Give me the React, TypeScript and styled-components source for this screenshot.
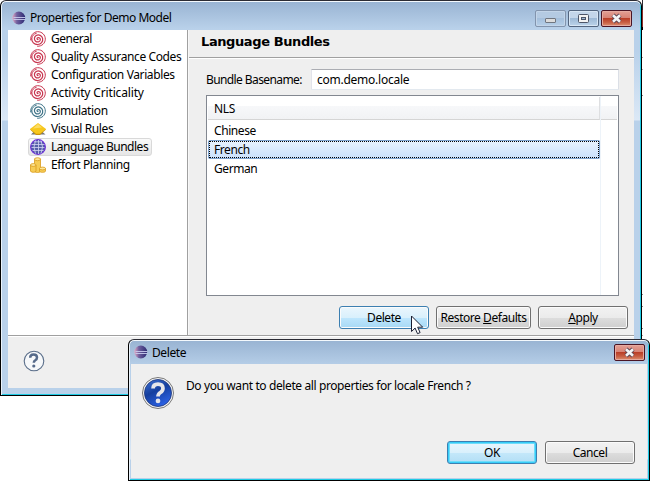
import React from "react";
import styled, { createGlobalStyle, css } from "styled-components";

const Global = createGlobalStyle`
  * { box-sizing: border-box; }
  html, body { margin: 0; background: #fff; overflow: hidden; }
  body { font: 12px/18px "Noto Sans", "Open Sans", sans-serif; color: #000; letter-spacing: -0.35px; }
`;

const Desktop = styled.main`
  position: relative;
  width: 650px;
  height: 484px;
  overflow: hidden;
`;

/* Sliver of another window peeking out behind the properties window. */
const BehindEdge = styled.div`
  position: absolute;
  left: 642px;
  top: 0;
  width: 1px;
  height: 336px;
  background: linear-gradient(
    #2b2b33 0 10px, #8e2f2a 10px 27px, #000 27px 30px, #fff 30px 57px, #a0a0a0 57px 58px,
    #fff 58px 69px, #abadb3 69px 70px, #fff 70px 95px, #828790 95px 96px, #fff 96px 294px,
    #828790 294px 295px, #fff 295px 306px, #888 306px 307px, #fff 307px 328px, #888 328px 329px,
    #fff 329px 335px, #a0a0a0 335px
  );
`;

/* Windows float freely on the desktop. */
const Frame = styled.section<{ $x: number; $y: number; $w: number; $h: number; $pad: string }>`
  position: absolute;
  left: ${(p) => p.$x}px;
  top: ${(p) => p.$y}px;
  width: ${(p) => p.$w}px;
  height: ${(p) => p.$h}px;
  display: flex;
  flex-direction: column;
  padding: ${(p) => p.$pad};
  border: 1px solid #000;
  border-top-color: #2b2b33;
  border-radius: 6px 6px 0 0;
  background: linear-gradient(#98b3d2, #b9d1ea 28px, #b9d1ea 50px, #dbe8f6 119px, #b9d1ea 120px);
  box-shadow: inset 0 1px #f4f9fd, inset 1px 0 #eaf3fb, inset -1px -1px #1ecbe4;
`;

const TitleBar = styled.header<{ $h: number; $left: number }>`
  flex: none;
  height: ${(p) => p.$h}px;
  display: flex;
  align-items: flex-start;
  padding-left: ${(p) => p.$left}px;
`;

const TitleIcon = styled.span<{ $top: number }>`
  flex: none;
  width: 14px;
  height: 14px;
  margin-top: ${(p) => p.$top}px;
  svg { display: block; }
`;

const Title = styled.h1<{ $top: number; $ls: number }>`
  flex: 1;
  margin: ${(p) => p.$top}px 0 0 4px;
  font: inherit;
  letter-spacing: ${(p) => p.$ls}px;
  white-space: nowrap;
`;

const Captions = styled.div<{ $top: number; $right: number }>`
  display: flex;
  gap: 2px;
  margin: ${(p) => p.$top}px ${(p) => p.$right}px 0 0;
`;

const Caption = styled.button<{ $kind?: "faded" | "close" }>`
  width: 31px;
  height: 17px;
  padding: 0;
  display: grid;
  place-items: center;
  border: 1px solid #53657f;
  border-radius: 2px;
  background: linear-gradient(#c4d6ea 0 45%, #9cb8d5 46%, #bcd3ea);
  box-shadow: inset 0 0 0 1px #d8e6f4;
  ${(p) => p.$kind === "faded" && css`
    border-color: #8294ad;
    background: linear-gradient(#b4cae2 0 45%, #a3bedb 46%, #b6cfe8);
    box-shadow: inset 0 0 0 1px #c3d5e9;
    svg { margin-top: 4px; }
  `}
  ${(p) => p.$kind === "close" && css`
    border-color: #4a1424;
    background: linear-gradient(#e3a095, #d88376 45%, #b83a24 46%, #c75d43 75%, #dd9070);
    box-shadow: inset 0 0 0 1px #e5aaa0;
  `}
`;

const Client = styled.div`
  flex: 1;
  min-height: 0;
  display: flex;
  flex-direction: column;
  background: #efefef;
`;

const Split = styled.div`
  flex: none;
  height: 305px;
  display: flex;
`;

const Tree = styled.ul`
  width: 180px;
  margin: 0;
  padding: 0 0 0 20px;
  list-style: none;
  background: #fff;
  border-right: 1px solid #a0a0a0;
`;

const TreeItem = styled.li<{ $selected?: boolean; $ls?: number }>`
  width: fit-content;
  height: 18px;
  display: flex;
  align-items: center;
  gap: 5px;
  padding: 0 3px 0 1px;
  border: 1px solid transparent;
  border-radius: 3px;
  line-height: 18px;
  white-space: nowrap;
  letter-spacing: ${(p) => p.$ls ?? -0.38}px;
  svg { flex: none; }
  ${(p) => p.$selected && css`
    border-color: #d9d9d9;
    background: linear-gradient(#fafafa, #e6e6e6);
  `}
`;

const Page = styled.div`
  flex: 1;
  display: flex;
  flex-direction: column;
  border-left: 1px solid #f8f8f8;
`;

const PageTitle = styled.h2`
  height: 29px;
  margin: 0;
  padding: 3px 0 0 12px;
  border-bottom: 1px solid #fff;
  box-shadow: inset 0 -1px #a0a0a0;
  font: bold 13px/18px "DejaVu Sans", sans-serif;
  letter-spacing: -0.4px;
`;

const Field = styled.label`
  display: flex;
  align-items: center;
  height: 21px;
  margin: 10px 15px 0 17px;
  white-space: nowrap;
`;

const FieldName = styled.span`
  width: 105px;
  letter-spacing: -0.6px;
`;

const Input = styled.input`
  flex: 1;
  min-width: 0;
  height: 21px;
  padding: 0 5px;
  border: 1px solid #e3e9ef;
  border-color: #abadb3 #dbdfe6 #e3e9ef #e2e3ea;
  border-radius: 1px;
  background: #fff;
  font: inherit;
  letter-spacing: -0.25px;
  outline: 0;
`;

const Table = styled.div`
  height: 201px;
  margin: 5px 15px 0 17px;
  display: flex;
  border: 1px solid #828790;
  background: #fff;
`;

const Column = styled.div`
  width: 394px;
  padding: 1px 0 0 1px;
  border-right: 1px solid #edf3f9;
`;

const HeadCell = styled.div`
  height: 23px;
  padding: 3px 0 0 6px;
  line-height: 18px;
  border-bottom: 1px solid #d5d5d5;
  border-right: 1px solid #dedfe1;
  background: linear-gradient(#fff 0 40%, #f7f8fa 41%, #f1f2f4);
`;

const HeadRest = styled(HeadCell)`
  flex: 1;
  margin: 1px 1px 0 0;
  border-right: 0;
`;

const Row = styled.div<{ $selected?: boolean }>`
  position: relative;
  height: 19px;
  padding-left: 6px;
  line-height: 19px;
  letter-spacing: -0.42px;
  ${(p) => p.$selected && css`
    border-radius: 2px;
    background: linear-gradient(#e9f3fe, #c9e0fc);
    box-shadow: inset 0 0 0 1px #7da2ce;
    &::after {
      content: "";
      position: absolute;
      inset: 1px;
      border: 1px dotted #000;
    }
  `}
`;

const Rows = styled.div`
  padding-top: 1px;
`;

const Actions = styled.div`
  display: flex;
  justify-content: flex-end;
  gap: 7px;
  margin: 10px 6px 0 0;
`;

const Button = styled.button<{ $w?: number; $tone?: "hot" | "default" }>`
  width: ${(p) => p.$w ?? 90}px;
  height: 23px;
  padding: 0;
  border: 1px solid #707070;
  border-radius: 3px;
  background: linear-gradient(#f2f2f2, #ebebeb 50%, #dddddd 51%, #cfcfcf);
  box-shadow: inset 0 0 0 1px #fbfbfb;
  color: #000;
  font: inherit;
  letter-spacing: -0.45px;
  white-space: nowrap;
  ${(p) => p.$tone === "hot" && css`
    border-color: #3c7fb1;
    background: linear-gradient(#eaf6fd, #d9f0fc 50%, #bee6fd 51%, #a7d9f5);
  `}
  ${(p) => p.$tone === "default" && css`
    border-color: #3c7fb1;
    background: linear-gradient(#eaf6fd, #d9f0fc 50%, #c4e8fa 51%, #b2def5);
    box-shadow: inset 0 0 0 1px #36cdf8, inset 0 0 0 2px #6fdcfa;
  `}
`;

const Footer = styled.footer`
  flex: 1;
  min-height: 0;
  padding: 14px 15px 0;
  border-top: 1px solid #a0a0a0;
  box-shadow: inset 0 1px #fff;
  svg { display: block; }
`;

const Message = styled.div`
  flex: 1;
  display: flex;
  gap: 12px;
  padding: 13px 11px;
  p { margin: 0; letter-spacing: -0.39px; }
`;

const DialogActions = styled.div`
  display: flex;
  justify-content: flex-end;
  gap: 8px;
  padding: 0 12px 14px;
`;

/* The pointer lies over the Delete button. */
const Pointer = styled.svg`
  position: absolute;
  left: 411px;
  top: 315px;
`;

const EclipseIcon = ({ id }: { id: string }) => (
  <svg width="14" height="14" viewBox="0 0 14 14">
    <defs>
      <linearGradient id={id}>
        <stop offset="0" stopColor="#e2a9c4" />
        <stop offset=".35" stopColor="#70609f" />
        <stop offset="1" stopColor="#2c2a72" />
      </linearGradient>
    </defs>
    <circle cx="6.8" cy="7" r="6.4" fill={`url(#${id})`} />
    <path d="M1.5 6.5h12M1.5 8.5h12" stroke="#c9cdee" strokeWidth=".9" />
  </svg>
);

const Spiral = ({ color }: { color: string }) => (
  <svg width="16" height="16" viewBox="0 0 16 16" fill="none" stroke={color} strokeWidth="1.25" strokeLinecap="round">
    <path d="M8 8.6C7 8.7 6.6 7.4 7.6 6.8C9 6 10.7 7.3 10.3 9C9.9 11 7.2 11.6 5.6 10.2C3.7 8.5 4.2 5.6 6.2 4.5C8.8 3 12 4.6 12.6 7.4C13.3 10.6 10.9 13.4 7.8 13.5C4.2 13.6 1.6 10.9 1.7 7.6" />
    <path d="M.7 9C.2 4.6 3.4.8 7.6.7C12 .6 15.4 4 15.3 8.2C15.2 12.3 12 15.3 7.6 15.3M1.8 7.2C2.2 4.6 3.8 2.8 6.2 2.4" strokeWidth="1" />
  </svg>
);

const RulesIcon = () => (
  <svg width="16" height="16" viewBox="0 0 16 16">
    <path d="M1 13.5L4 10.5h8l3.5 3z" fill="#777" />
    <path d="M0 8.5L8 4l8 4.5L10 14H6z" fill="#c99309" />
    <path d="M0 8L8 2 16 8l-6 4.8H6z" fill="#f7c71c" />
    <path d="M3 7.5L8 3l4 3.5z" fill="#fbdc66" />
  </svg>
);

const GlobeIcon = () => (
  <svg width="16" height="16" viewBox="0 0 16 16" fill="none">
    <circle cx="8" cy="8" r="7.3" fill="#5560a8" stroke="#6b2fd6" strokeWidth="1.3" />
    <path d="M1.5 5.5h13M1.5 8.5h13M2.5 11.5h11M4 2.8h8M5.5 1.5q-3 6.5 0 13M8.5 1v14M11 1.5q3 6.5 0 13" stroke="#d6d4f5" strokeWidth=".8" />
  </svg>
);

const CoinsIcon = () => (
  <svg width="16" height="16" viewBox="0 0 16 16" fill="#f6cc55" stroke="#d99a1c" strokeWidth=".8">
    <path d="M4.5 2v12c0 2 6 2 6 0V2z" />
    <ellipse cx="7.5" cy="2.2" rx="3" ry="1.5" fill="#fde79a" />
    <path d="M.5 8v6c0 1.8 5.5 1.8 5.5 0V8z" />
    <ellipse cx="3.25" cy="8" rx="2.75" ry="1.4" fill="#fde79a" />
    <path d="M9.5 11.5V14c0 1.8 6 1.8 6 0v-2.5z" />
    <ellipse cx="12.5" cy="11.5" rx="3" ry="1.4" fill="#fde79a" />
  </svg>
);

const CloseGlyph = () => (
  <svg width="13" height="11" viewBox="0 0 13 11">
    <path d="M3 2.2l7 6.6M10 2.2L3 8.8" stroke="#5b4350" strokeWidth="4.4" />
    <path d="M3 2.2l7 6.6M10 2.2L3 8.8" stroke="#f4f4f6" strokeWidth="2.6" />
  </svg>
);

const questionPath = "M7.2 7.8Q7.2 4.4 10.5 4.4Q14 4.4 14 7.4Q14 9.1 12.3 10.2Q10.8 11.1 10.8 12.8";

const HelpIcon = () => (
  <svg width="22" height="22" viewBox="0 0 22 22" fill="none">
    <circle cx="11" cy="11" r="9.8" fill="#f6f8fa" stroke="#596d89" strokeWidth="1.1" />
    <path d={questionPath} stroke="#566a8a" strokeWidth="2.5" />
    <circle cx="10.8" cy="16" r="1.6" fill="#566a8a" />
  </svg>
);

const QuestionIcon = () => (
  <svg width="32" height="32" viewBox="0.8 0.8 32.4 32.4" fill="none">
    <defs>
      <linearGradient id="ball" x1="0" y1="0" x2=".5" y2="1">
        <stop offset="0" stopColor="#3f74d8" />
        <stop offset=".5" stopColor="#153f9e" />
        <stop offset="1" stopColor="#2a5fe0" />
      </linearGradient>
    </defs>
    <circle cx="17" cy="17" r="15.7" fill="#f3f3f3" stroke="#777" />
    <circle cx="17" cy="17" r="13.7" fill="url(#ball)" stroke="#1c3478" strokeWidth=".8" />
    <path d="M12 12.5Q12 8 17 8Q22 8 22 12.3Q22 15 19.5 16.5Q17 18 17 20.5" stroke="#e6e6ea" strokeWidth="3.8" />
    <circle cx="17" cy="25" r="2.4" fill="#e6e6ea" />
  </svg>
);

const RED = "#c8354f";

export default function App() {
  return (
    <>
      <Global />
      <Desktop>
        <BehindEdge />
        <Frame $x={0} $y={0} $w={642} $h={396} $pad="0 7px 7px 7px">
          <TitleBar $h={29} $left={4}>
            <TitleIcon $top={10}><EclipseIcon id="sun-main" /></TitleIcon>
            <Title $top={8} $ls={-0.48}>Properties for Demo Model</Title>
            <Captions $top={9} $right={2}>
              <Caption $kind="faded">
                <svg width="11" height="5"><rect x=".5" y=".5" width="10" height="4" rx=".5" fill="#dcdcdc" stroke="#707680" /></svg>
              </Caption>
              <Caption>
                <svg width="11" height="9"><rect x=".5" y=".5" width="10" height="8" rx="1" fill="#f2f2f2" stroke="#4d5568" /><rect x="3.5" y="3.5" width="4" height="2" fill="#9db6d0" stroke="#4d5568" /></svg>
              </Caption>
              <Caption $kind="close"><CloseGlyph /></Caption>
            </Captions>
          </TitleBar>
          <Client>
            <Split>
              <Tree>
                <TreeItem $ls={-0.5}><Spiral color={RED} />General</TreeItem>
                <TreeItem><Spiral color={RED} />Quality Assurance Codes</TreeItem>
                <TreeItem><Spiral color={RED} />Configuration Variables</TreeItem>
                <TreeItem $ls={-0.15}><Spiral color={RED} />Activity Criticality</TreeItem>
                <TreeItem $ls={-0.35}><Spiral color="#3f7488" />Simulation</TreeItem>
                <TreeItem><RulesIcon />Visual Rules</TreeItem>
                <TreeItem $selected $ls={-0.48}><GlobeIcon />Language Bundles</TreeItem>
                <TreeItem><CoinsIcon />Effort Planning</TreeItem>
              </Tree>
              <Page>
                <PageTitle>Language Bundles</PageTitle>
                <Field>
                  <FieldName>Bundle Basename:</FieldName>
                  <Input defaultValue="com.demo.locale" />
                </Field>
                <Table>
                  <Column>
                    <HeadCell>NLS</HeadCell>
                    <Rows>
                      <Row>Chinese</Row>
                      <Row $selected>French</Row>
                      <Row>German</Row>
                    </Rows>
                  </Column>
                  <HeadRest />
                </Table>
                <Actions>
                  <Button $tone="hot">Delete</Button>
                  <Button $w={95}>Restore <u>D</u>efaults</Button>
                  <Button><u>A</u>pply</Button>
                </Actions>
              </Page>
            </Split>
            <Footer><HelpIcon /></Footer>
          </Client>
        </Frame>
        <Pointer width="13" height="20" viewBox="0 0 13 20">
          <path d="M.5 1v15.5l3.6-3.4 2.4 5.6 2.6-1.1-2.4-5.4h5z" fill="#fff" stroke="#1a1f33" />
        </Pointer>
        <Frame $x={128} $y={339} $w={522} $h={142} $pad="0 2px 2px 2px">
          <TitleBar $h={24} $left={3}>
            <TitleIcon $top={5}><EclipseIcon id="sun-dialog" /></TitleIcon>
            <Title $top={4} $ls={-0.4}>Delete</Title>
            <Captions $top={4} $right={2}>
              <Caption $kind="close"><CloseGlyph /></Caption>
            </Captions>
          </TitleBar>
          <Client>
            <Message>
              <QuestionIcon />
              <p>Do you want to delete all properties for locale French ?</p>
            </Message>
            <DialogActions>
              <Button $tone="default">OK</Button>
              <Button>Cancel</Button>
            </DialogActions>
          </Client>
        </Frame>
      </Desktop>
    </>
  );
}
